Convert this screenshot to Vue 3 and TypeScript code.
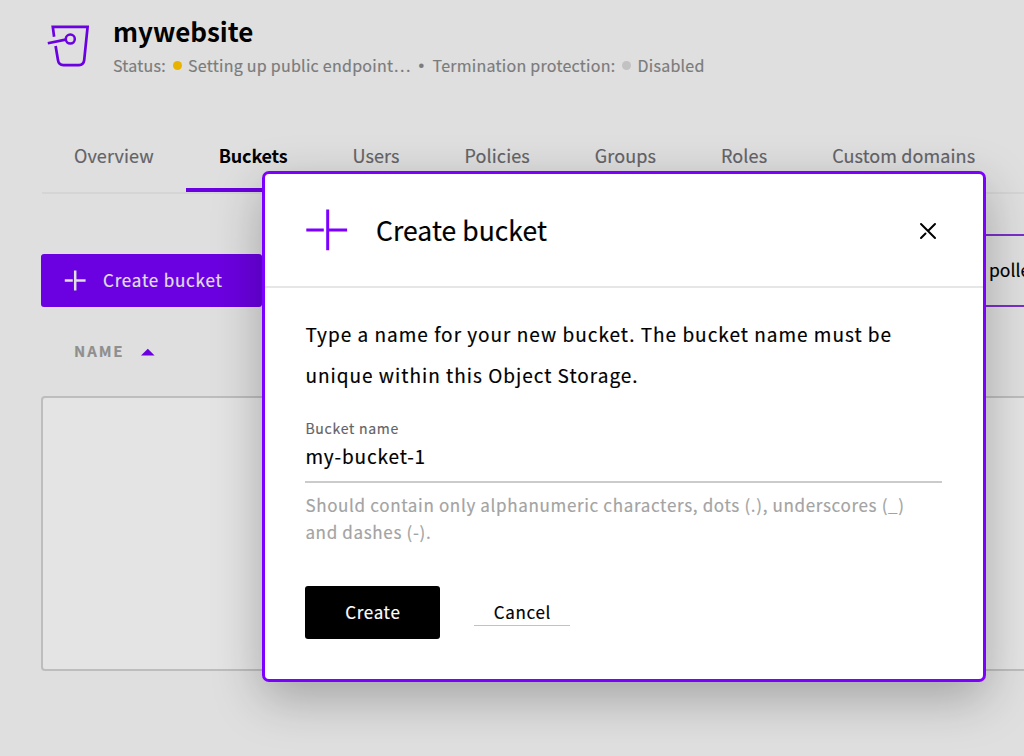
<script setup lang="ts">
import { ref } from 'vue'

interface Tab {
  id: string
  label: string
}

const tabs: Tab[] = [
  { id: 'overview', label: 'Overview' },
  { id: 'buckets', label: 'Buckets' },
  { id: 'users', label: 'Users' },
  { id: 'policies', label: 'Policies' },
  { id: 'groups', label: 'Groups' },
  { id: 'roles', label: 'Roles' },
  { id: 'domains', label: 'Custom domains' },
]
const activeTab = ref('buckets')
const bucketName = ref('my-bucket-1')
</script>

<template>
  <div class="page">
    <header class="header">
      <svg class="logo" width="44" height="46" viewBox="0 0 44 46" fill="none" stroke="#6b00e0">
        <path d="M7.1 14.8 5.8 4.9H40.6L37.2 38.2Q36.6 43.1 32 43.1H16.5Q11.6 43.1 11 38.2L8.6 24" stroke-width="2.7" />
        <path d="M.8 21.2 18.6 17.6" stroke-width="2.7" />
        <circle cx="23.3" cy="17.1" r="4.5" stroke-width="2.5" />
      </svg>
      <div class="heading">
        <h1 class="name">mywebsite</h1>
        <div class="status">
          <span>Status:</span>
          <i class="dot warn"></i>
          <span>Setting up public endpoint…</span>
          <span class="sep">•</span>
          <span>Termination protection:</span>
          <i class="dot off"></i>
          <span>Disabled</span>
        </div>
      </div>
    </header>

    <nav class="tabs">
      <a
        v-for="tab in tabs"
        :key="tab.id"
        :class="['tab', { active: tab.id === activeTab }]"
        @click="activeTab = tab.id"
      >{{ tab.label }}</a>
    </nav>

    <div class="toolbar">
      <button class="add">
        <svg width="22" height="22" viewBox="0 0 22 22" fill="none" stroke="#e0e0e0" stroke-width="2.5">
          <path d="M.8 10.5H8.8M11.2 .4V20.6M11 10.5H21.6" />
        </svg>
        <span>Create bucket</span>
      </button>
      <div class="filter">polle</div>
    </div>

    <div class="columns">
      <span>NAME</span>
      <svg width="14" height="8" viewBox="0 0 14 8"><path d="M0 7.6 6.8.8 13.6 7.6z" fill="#6b00e0" /></svg>
    </div>
    <div class="table"></div>

    <section class="modal">
      <div class="modal-head">
        <svg width="42" height="42" viewBox="0 0 42 42" fill="none" stroke="#7d00ff" stroke-width="3">
          <path d="M.3 21H17.8M21.7 .5V41.3M22.5 21H41.1" />
        </svg>
        <h2 class="modal-title">Create bucket</h2>
        <svg class="close" width="18" height="18" viewBox="0 0 18 18" fill="none" stroke="#000" stroke-width="2" stroke-linecap="round">
          <path d="M2 2 16 16M16 2 9 9M6.5 11.5 2 16" />
        </svg>
      </div>
      <div class="modal-body">
        <p class="lead">
          Type a name for your new bucket. The bucket name must be<br />unique within this Object Storage.
        </p>
        <div class="field">
          <label class="label">Bucket name</label>
          <div class="value">{{ bucketName }}</div>
        </div>
        <p class="hint">
          Should contain only alphanumeric characters, dots (.), underscores (_)<br />and dashes (-).
        </p>
        <div class="actions">
          <button class="create">Create</button>
          <a class="cancel">Cancel</a>
        </div>
      </div>
    </section>
  </div>
</template>

<style>
body {
  margin: 0;
  overflow: hidden;
}
</style>

<style scoped>
.page {
  position: relative;
  width: 1024px;
  height: 756px;
  overflow: hidden;
  box-sizing: border-box;
  background: #dfdfdf;
  color: #000;
  font-family: "Noto Sans CJK SC", "Noto Sans", sans-serif;
  white-space: nowrap;
  -webkit-text-stroke: 0.18px currentColor;
}
h1, h2, p { margin: 0; }
button {
  border: 0;
  padding: 0;
  font: inherit;
}
svg { display: block; flex: none; }
.header {
  display: flex;
  padding: 13px 0 0 47px;
  height: 118px;
}
.logo { margin-top: 9px; }
.heading { margin-left: 22px; }
.name {
  font-size: 26px;
  line-height: 36px;
  font-weight: 700;
  -webkit-text-stroke: 0;
}
.status {
  display: flex;
  align-items: center;
  margin-top: 3px;
  height: 26px;
  font-size: 16px;
  line-height: 26px;
  letter-spacing: 0.26px;
  color: #7b7b7b;
}
.dot {
  width: 9px;
  height: 9px;
  border-radius: 50%;
}
.warn { margin: 1px 6px 0 7px; background: #e8b300; }
.off { margin: 1px 6px 0 7px; background: #c2c2c2; }
.sep {
  margin: 2px 8px 0;
  font-family: "Liberation Sans", sans-serif;
}
.tabs {
  display: flex;
  margin-left: 41.5px;
  height: 61px;
  border-bottom: 2px solid #d5d5d5;
}
.tab {
  flex: none;
  box-sizing: border-box;
  padding: 11px 32.5px 0;
  height: 61px;
  font-size: 18px;
  line-height: 26px;
  letter-spacing: 0.1px;
  color: #636367;
}
.tab.active {
  border-bottom: 4px solid #6b00e0;
  color: #000;
  font-weight: 700;
  letter-spacing: -0.2px;
  -webkit-text-stroke: 0;
}
.toolbar {
  display: flex;
  align-items: flex-end;
  margin: 41px 0 0 41px;
  height: 72px;
}
.add {
  display: flex;
  flex: none;
  align-items: center;
  box-sizing: border-box;
  width: 221px;
  height: 53px;
  padding-left: 23px;
  border-radius: 3px;
  background: #6b00e0;
  color: #e0e0e0;
  font-size: 17px;
  letter-spacing: 0.8px;
}
.add span {
  margin-left: 17px;
  padding-bottom: 3px;
}
.filter {
  flex: none;
  box-sizing: border-box;
  width: 240px;
  height: 73px;
  margin-left: 638px;
  padding-left: 87px;
  border: 2px solid #7a2fc8;
  line-height: 67px;
  font-size: 17.5px;
}
.columns {
  display: flex;
  align-items: center;
  height: 24px;
  margin: 31px 0 0 74px;
  font-size: 15px;
  font-weight: 700;
  letter-spacing: 1.9px;
  color: #8f8f8f;
}
.columns svg { margin: 3px 0 0 17px; }
.table {
  box-sizing: border-box;
  width: 1100px;
  height: 275px;
  margin: 34px 0 0 41px;
  border: 2px solid #bdbdbd;
  border-radius: 4px;
  background: #e4e4e4;
}
.modal {
  position: absolute;
  left: 262px;
  top: 171px;
  width: 723.5px;
  height: 511px;
  box-sizing: border-box;
  border: 3px solid #7d00ff;
  border-radius: 7px;
  background: #fff;
  box-shadow: 0 16px 50px rgba(0, 0, 0, 0.27);
}
.modal-head {
  display: flex;
  align-items: center;
  height: 112px;
  padding: 0 45.5px 0 40.5px;
  border-bottom: 2px solid #e6e6e6;
}
.modal-title {
  margin-left: 28.5px;
  padding-bottom: 1px;
  font-size: 26.5px;
  font-weight: 400;
  letter-spacing: 0.05px;
}
.close { margin: 2px 0 0 auto; }
.modal-body { padding: 25px 41px 0 40.4px; }
.lead {
  font-size: 19px;
  line-height: 41px;
  letter-spacing: 1px;
}
.field {
  margin-top: 20px;
  height: 66px;
  border-bottom: 2px solid #cbcbcb;
}
.label {
  display: block;
  font-size: 14px;
  line-height: 27px;
  letter-spacing: 0.75px;
  color: #636367;
}
.value {
  font-size: 19px;
  line-height: 27px;
  letter-spacing: 0.85px;
}
.hint {
  margin-top: 8px;
  font-size: 17px;
  line-height: 27px;
  letter-spacing: 0.66px;
  color: #a3a3a3;
}
.actions {
  display: flex;
  align-items: center;
  margin-top: 41px;
}
.create {
  width: 135px;
  height: 53px;
  padding-bottom: 2px;
  border-radius: 3px;
  background: #000;
  color: #fff;
  font-size: 17px;
  letter-spacing: 0.65px;
}
.cancel {
  margin-left: 34px;
  width: 96px;
  border-bottom: 1px solid #c2c2c2;
  line-height: 26px;
  text-align: center;
  font-size: 17px;
  letter-spacing: 0.7px;
}
</style>
